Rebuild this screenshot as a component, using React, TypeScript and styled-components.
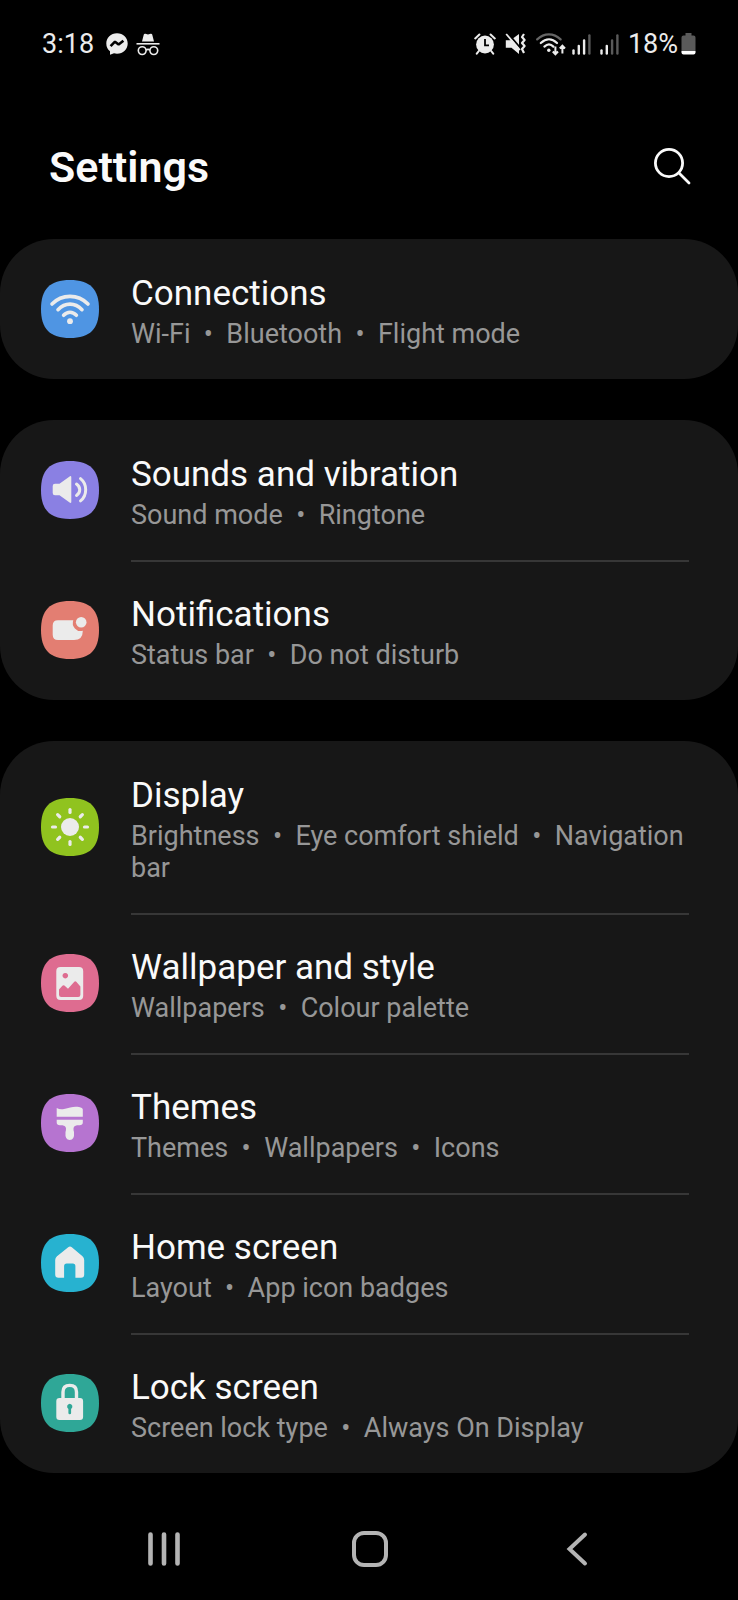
import React from "react";
import styled, { createGlobalStyle } from "styled-components";

const GlobalStyle = createGlobalStyle`
  *, *::before, *::after { box-sizing: border-box; }
  body {
    margin: 0;
    background: #000;
    color: #fafafa;
    font-family: Roboto, "Liberation Sans", sans-serif;
  }
  button { border: 0; padding: 0; background: none; color: inherit; font: inherit; cursor: pointer; }
`;

const Screen = styled.div`
  display: flex;
  flex-direction: column;
  min-height: 100vh;
`;

const StatusBar = styled.div`
  display: flex;
  align-items: center;
  justify-content: space-between;
  height: 88px;
  padding: 0 42px;
  font-size: 27px;
  line-height: 32px;
  color: #ececec;
`;

const StatusGroup = styled.div<{ $gap: number }>`
  display: flex;
  align-items: center;
  gap: ${(p) => p.$gap}px;

  svg { display: block; flex: none; }
`;

const Header = styled.header`
  display: flex;
  align-items: center;
  justify-content: space-between;
  height: 151px;
  padding: 6px 46px 0 49px;
`;

const PageTitle = styled.h1`
  margin: 0;
  font-size: 43px;
  line-height: 50px;
  font-weight: 600;
`;

const SearchButton = styled.button`
  display: flex;
  svg { display: block; }
`;

const Groups = styled.main`
  display: flex;
  flex-direction: column;
  gap: 41px;
`;

const Card = styled.ul`
  margin: 0;
  padding: 0;
  list-style: none;
  border-radius: 54px;
  background: #171717;
`;

const Row = styled.a`
  display: flex;
  align-items: center;
  gap: 32px;
  padding: 0 49px 0 41px;
  color: inherit;
  text-decoration: none;
`;

const Tile = styled.svg`
  display: block;
  flex: none;
`;

const RowText = styled.span<{ $divided: boolean }>`
  position: relative;
  flex: 1;
  min-width: 0;
  display: flex;
  flex-direction: column;
  gap: 3px;
  padding: 33px 0 29px;

  &::after {
    content: "";
    display: ${(p) => (p.$divided ? "block" : "none")};
    position: absolute;
    left: 0;
    right: 0;
    bottom: -2px;
    height: 2px;
    background: #373737;
  }
`;

const RowTitle = styled.span`
  font-size: 35px;
  line-height: 43px;
`;

const RowSummary = styled.span`
  font-size: 27px;
  line-height: 32px;
  color: #979797;
  white-space: pre-wrap;
`;

const NavBar = styled.nav`
  display: grid;
  grid-template-columns: repeat(3, 1fr);
  flex: 1;
  min-height: 127px;
  padding: 24px 58px 0 61px;
`;

const NavButton = styled.button`
  display: flex;
  align-items: center;
  justify-content: center;
`;

const INK = "#ebebeb";

const glyphs = {
  wifi: (
    <g fill="none" stroke={INK} strokeWidth="3.6" strokeLinecap="round">
      <path d="M11 24C21 13.800 37 13.800 47 24" />
      <path d="M17 29.700C24 22.300 34 22.300 41 29.700" />
      <path d="M22.600 35.300C26.400 31.200 31.600 31.200 35.400 35.300" />
      <circle cx="29" cy="41.200" r="2.900" fill={INK} stroke="none" />
    </g>
  ),
  sound: (
    <g>
      <path
        d="M14 22.700H18.500L28.600 15.400Q30.300 14.400 30.300 16.400V40.800Q30.300 42.800 28.600 41.600L18.500 34.300H14Q11.700 34.300 11.700 32V25Q11.700 22.700 14 22.700Z"
        fill={INK}
      />
      <g fill="none" stroke={INK} strokeWidth="3" strokeLinecap="round">
        <path d="M35.500 23C39.800 26 39.800 31.500 35.500 34.500" />
        <path d="M39.500 17.600C46.400 23 46.400 34.500 39.500 39.900" />
      </g>
    </g>
  ),
  notifications: (
    <g fill={INK}>
      <path d="M17 19.300H32.300A8 8 0 0 0 41.800 29.800V30Q41.800 39 33 39H17Q11.700 39 11.700 33.700V24.600Q11.700 19.300 17 19.300Z" />
      <circle cx="40.200" cy="21.300" r="5.300" />
    </g>
  ),
  display: (
    <g>
      <circle cx="29" cy="29" r="9" fill={INK} />
      <g stroke={INK} strokeWidth="3.2" strokeLinecap="round">
        {[0, 45, 90, 135, 180, 225, 270, 315].map((a) => (
          <path key={a} d="M29 11.500V14.500" transform={`rotate(${a} 29 29)`} />
        ))}
      </g>
    </g>
  ),
  wallpaper: (
    <path
      fill={INK}
      fillRule="evenodd"
      d="M19.500 13H38Q42.200 13 42.200 17.200V41.800Q42.200 46 38 46H19.500Q15.300 46 15.300 41.800V17.200Q15.300 13 19.500 13ZM24.300 18.900a2.800 2.800 0 1 0 .01 0ZM18 35.600V40.800Q18 43 20.200 43H37.200Q39.400 43 39.400 40.800V32.500L35.300 27.800Q34.300 26.800 33.300 27.800L27 34.800L23.400 31.600Q22.400 30.800 21.400 31.800Z"
    />
  ),
  themes: (
    <g fill={INK}>
      <path d="M15.700 14Q19 15.900 23 15C29 13.500 33 12 38 13Q41.800 13.600 41.800 15.500V22.700H15.700Z" />
      <path d="M15.700 25.800H41.800V28.500Q41.800 31.300 38.500 31.300H36Q32.800 31.800 32.500 34.500Q32.400 36 33 38Q33.700 46 28.750 46Q23.800 46 24.500 38Q25.100 36 25 34.500Q24.700 31.800 21.500 31.300H19Q15.700 31.300 15.700 28.500Z" />
    </g>
  ),
  home: (
    <path
      fill={INK}
      d="M27.200 13.200Q29 11.600 30.800 13.200L41.500 22.200Q43.200 23.600 43.200 26V40.500Q43.200 43.700 40 43.700H34.400V32.200Q34.400 29.600 31.800 29.600H25.700Q23.100 29.600 23.100 32.200V43.700H17.500Q14.200 43.700 14.200 40.500V26Q14.200 23.600 16 22.200Z"
    />
  ),
  lock: (
    <g>
      <path d="M22 25V18Q22 11.400 28.750 11.400Q35.500 11.400 35.500 18V25" fill="none" stroke={INK} strokeWidth="3.4" />
      <path
        fill={INK}
        fillRule="evenodd"
        d="M18.500 24H39Q42.100 24 42.100 27.200V42.800Q42.100 46 39 46H18.500Q15.300 46 15.300 42.800V27.200Q15.300 24 18.500 24ZM28.750 29.700A2.900 2.900 0 0 0 27.400 35V39Q27.400 40.200 28.750 40.200Q30.100 40.200 30.100 39V35A2.900 2.900 0 0 0 28.750 29.700Z"
      />
    </g>
  ),
};

type GlyphName = keyof typeof glyphs;

function IconTile({ name, color }: { name: GlyphName; color: string }) {
  return (
    <Tile width="58" height="58" viewBox="0 0 58 58" aria-hidden="true">
      <path d="M29 0C49 0 58 9 58 29S49 58 29 58S0 49 0 29S9 0 29 0Z" fill={color} />
      {glyphs[name]}
    </Tile>
  );
}

interface Setting {
  title: string;
  summary: string[];
  icon: GlyphName;
  color: string;
}

const groups: Setting[][] = [
  [{ title: "Connections", summary: ["Wi-Fi", "Bluetooth", "Flight mode"], icon: "wifi", color: "#4f95e3" }],
  [
    { title: "Sounds and vibration", summary: ["Sound mode", "Ringtone"], icon: "sound", color: "#8a80e3" },
    { title: "Notifications", summary: ["Status bar", "Do not disturb"], icon: "notifications", color: "#e37e72" },
  ],
  [
    {
      title: "Display",
      summary: ["Brightness", "Eye comfort shield", "Navigation bar"],
      icon: "display",
      color: "#90c31f",
    },
    { title: "Wallpaper and style", summary: ["Wallpapers", "Colour palette"], icon: "wallpaper", color: "#de6c90" },
    { title: "Themes", summary: ["Themes", "Wallpapers", "Icons"], icon: "themes", color: "#b674d0" },
    { title: "Home screen", summary: ["Layout", "App icon badges"], icon: "home", color: "#27b2d0" },
    { title: "Lock screen", summary: ["Screen lock type", "Always On Display"], icon: "lock", color: "#2fa797" },
  ],
];

const MessengerIcon = () => (
  <svg width="22" height="22" viewBox="0 0 22 22" aria-hidden="true">
    <path
      d="M11 .3C17.200.3 21.700 4.800 21.700 10.500S17.200 20.700 11 20.700Q9.400 20.700 8 20.300L4 21.700V18.300Q.3 15.200.3 10.500C.3 4.800 4.800.3 11 .3Z"
      fill="#ececec"
    />
    <path d="M4.600 13.200L9 8.700L12.600 11.600L17.400 7.800" fill="none" stroke="#000" strokeWidth="2.600" strokeLinejoin="bevel" />
  </svg>
);

const IncognitoIcon = () => (
  <svg width="24" height="23" viewBox="0 0 24 23" aria-hidden="true">
    <path d="M6 8.500L7.800 1.600Q8.200.5 9.400.8L12 1.500L14.600.8Q15.800.5 16.200 1.600L18 8.500Z" fill="#ececec" />
    <path d="M.5 10.800H23.500" stroke="#ececec" strokeWidth="1.600" />
    <g fill="none" stroke="#ececec" strokeWidth="1.600">
      <circle cx="6.200" cy="17.600" r="3.900" />
      <circle cx="17.800" cy="17.600" r="3.900" />
      <path d="M10 17Q12 15.800 14 17" />
    </g>
  </svg>
);

const AlarmIcon = () => (
  <svg width="22" height="22" viewBox="0 0 22 22" aria-hidden="true">
    <circle cx="11" cy="11.500" r="8.900" fill="#ececec" />
    <path d="M11 6V12.300H15" fill="none" stroke="#000" strokeWidth="1.800" />
    <path d="M1.200 5.400L5.400 1.500M20.800 5.400L16.600 1.500M4.800 18L2.800 20.700M17.200 18L19.200 20.700" stroke="#ececec" strokeWidth="2" strokeLinecap="round" />
  </svg>
);

const MutedVibrateIcon = () => (
  <svg width="22" height="22" viewBox="0 0 22 22" aria-hidden="true">
    <path d="M.8 7.200H5.500L14 1V21L6.500 14.800H.8Z" fill="#ececec" />
    <path d="M2.600 0L15 14.600" stroke="#000" strokeWidth="2" />
    <path d="M1.200 1L15 17" stroke="#ececec" strokeWidth="1.800" />
    <path d="M19 1L17 4L19.600 7L17 10L19.600 13L17 16L19 20" fill="none" stroke="#ececec" strokeWidth="2.200" strokeLinejoin="round" />
  </svg>
);

const WifiStatusIcon = () => (
  <svg width="31" height="23" viewBox="0 0 31 23" aria-hidden="true">
    <g fill="none" strokeWidth="2.200" strokeLinecap="round">
      <path d="M1.200 6.400C8.200-.3 17.600-.3 24.600 6.400" stroke="#666" />
      <path d="M4.800 10C10 5.100 16 5.100 21 10" stroke="#ececec" />
      <path d="M8.400 13.600C11.400 10.800 14.600 10.800 17.400 13.600" stroke="#ececec" />
    </g>
    <circle cx="12.800" cy="17.300" r="1.700" fill="#ececec" />
    <path d="M19.400 13.500V21M16.800 18.500L19.400 21.200L22 18.500M26.400 20.500V13M23.800 15.500L26.400 12.800L29 15.500" fill="none" stroke="#ececec" strokeWidth="2" />
  </svg>
);

const SignalIcon = ({ level }: { level: number }) => (
  <svg width="19" height="21" viewBox="0 0 19 21" aria-hidden="true">
    {[16, 11.5, 6, 1].map((top, i) => (
      <path
        key={top}
        d={`M${1.5 + i * 5.3} ${top + 0.5}V19.500`}
        stroke={i < level ? "#ececec" : "#5a5a5a"}
        strokeWidth="2.400"
        strokeLinecap="round"
      />
    ))}
  </svg>
);

const BatteryIcon = () => (
  <svg width="15" height="22" viewBox="0 0 15 22" aria-hidden="true">
    <path d="M4.500 0H10.500V2.500H12.500Q14.500 2.500 14.500 4.500V18.500H.5V4.500Q.5 2.500 2.500 2.500H4.500Z" fill="#5a5a5a" />
    <path d="M.5 18H14.500V19.500Q14.500 21.500 12.500 21.500H2.500Q.5 21.500.5 19.500Z" fill="#fff" />
  </svg>
);

export default function App() {
  return (
    <>
      <GlobalStyle />
      <Screen>
        <StatusBar>
          <StatusGroup $gap={12}>
            <span>3:18</span>
            <StatusGroup $gap={8}>
              <MessengerIcon />
              <IncognitoIcon />
            </StatusGroup>
          </StatusGroup>
          <StatusGroup $gap={9}>
            <AlarmIcon />
            <MutedVibrateIcon />
            <StatusGroup $gap={5}>
              <WifiStatusIcon />
              <SignalIcon level={3} />
            </StatusGroup>
            <SignalIcon level={2} />
            <StatusGroup $gap={3}>
              <span>18%</span>
              <BatteryIcon />
            </StatusGroup>
          </StatusGroup>
        </StatusBar>

        <Header>
          <PageTitle>Settings</PageTitle>
          <SearchButton type="button" aria-label="Search">
            <svg width="40" height="40" viewBox="0 0 40 40" fill="none" stroke="#fafafa" strokeWidth="2.800" strokeLinecap="round">
              <circle cx="17" cy="16" r="13.600" />
              <path d="M27 26L37 36" />
            </svg>
          </SearchButton>
        </Header>

        <Groups>
          {groups.map((group) => (
            <Card key={group[0].title}>
              {group.map((item, i) => (
                <li key={item.title}>
                  <Row href={`#${item.icon}`}>
                    <IconTile name={item.icon} color={item.color} />
                    <RowText $divided={i < group.length - 1}>
                      <RowTitle>{item.title}</RowTitle>
                      <RowSummary>{item.summary.join("  •  ")}</RowSummary>
                    </RowText>
                  </Row>
                </li>
              ))}
            </Card>
          ))}
        </Groups>

        <NavBar aria-label="System navigation">
          <NavButton type="button" aria-label="Recent apps">
            <svg width="34" height="36" viewBox="0 0 34 36" stroke="#b4b4b4" strokeWidth="4.600" strokeLinecap="round">
              <path d="M3.500 3.500V32.500M17 3.500V32.500M30.500 3.500V32.500" />
            </svg>
          </NavButton>
          <NavButton type="button" aria-label="Home">
            <svg width="36" height="36" viewBox="0 0 36 36" fill="none" stroke="#b4b4b4" strokeWidth="4">
              <rect x="2" y="2" width="32" height="32" rx="10" />
            </svg>
          </NavButton>
          <NavButton type="button" aria-label="Back">
            <svg width="22" height="36" viewBox="0 0 22 36" fill="none" stroke="#b4b4b4" strokeWidth="4" strokeLinecap="round">
              <path d="M19 3.500L3.500 18L19 32.500" />
            </svg>
          </NavButton>
        </NavBar>
      </Screen>
    </>
  );
}
